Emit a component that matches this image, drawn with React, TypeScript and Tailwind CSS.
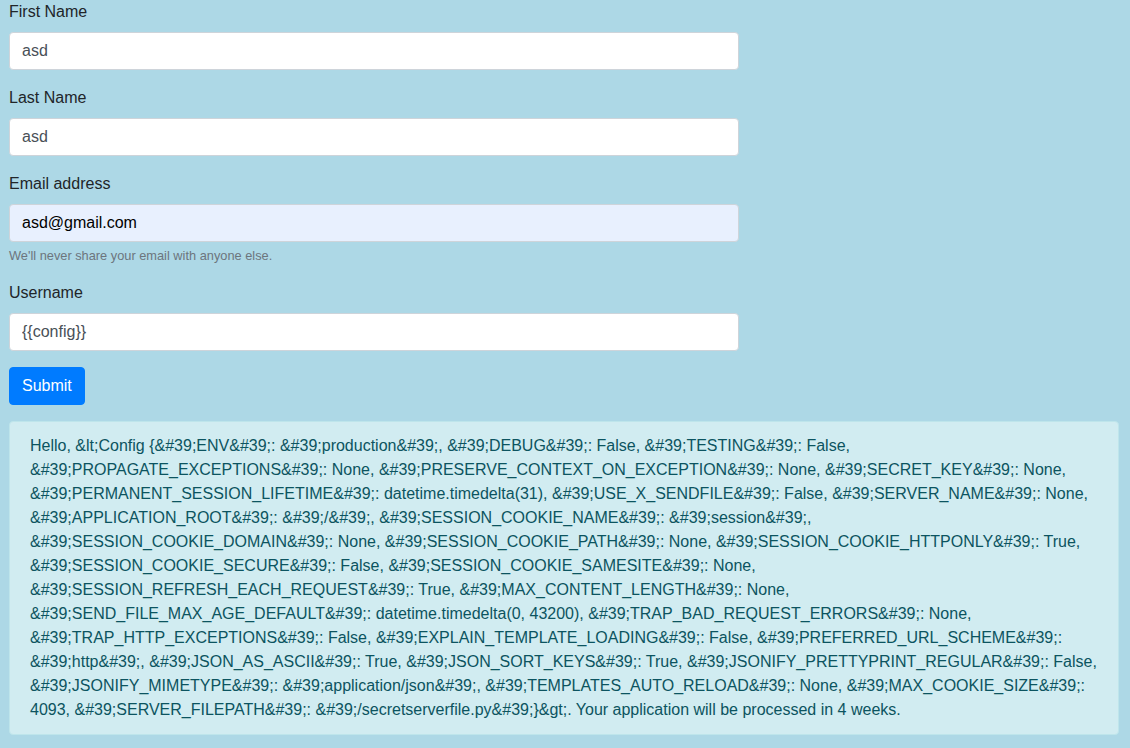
const lines = [
  "Hello, &lt;Config {&#39;ENV&#39;: &#39;production&#39;, &#39;DEBUG&#39;: False, &#39;TESTING&#39;: False,",
  "&#39;PROPAGATE_EXCEPTIONS&#39;: None, &#39;PRESERVE_CONTEXT_ON_EXCEPTION&#39;: None, &#39;SECRET_KEY&#39;: None,",
  "&#39;PERMANENT_SESSION_LIFETIME&#39;: datetime.timedelta(31), &#39;USE_X_SENDFILE&#39;: False, &#39;SERVER_NAME&#39;: None,",
  "&#39;APPLICATION_ROOT&#39;: &#39;/&#39;, &#39;SESSION_COOKIE_NAME&#39;: &#39;session&#39;,",
  "&#39;SESSION_COOKIE_DOMAIN&#39;: None, &#39;SESSION_COOKIE_PATH&#39;: None, &#39;SESSION_COOKIE_HTTPONLY&#39;: True,",
  "&#39;SESSION_COOKIE_SECURE&#39;: False, &#39;SESSION_COOKIE_SAMESITE&#39;: None,",
  "&#39;SESSION_REFRESH_EACH_REQUEST&#39;: True, &#39;MAX_CONTENT_LENGTH&#39;: None,",
  "&#39;SEND_FILE_MAX_AGE_DEFAULT&#39;: datetime.timedelta(0, 43200), &#39;TRAP_BAD_REQUEST_ERRORS&#39;: None,",
  "&#39;TRAP_HTTP_EXCEPTIONS&#39;: False, &#39;EXPLAIN_TEMPLATE_LOADING&#39;: False, &#39;PREFERRED_URL_SCHEME&#39;:",
  "&#39;http&#39;, &#39;JSON_AS_ASCII&#39;: True, &#39;JSON_SORT_KEYS&#39;: True, &#39;JSONIFY_PRETTYPRINT_REGULAR&#39;: False,",
  "&#39;JSONIFY_MIMETYPE&#39;: &#39;application/json&#39;, &#39;TEMPLATES_AUTO_RELOAD&#39;: None, &#39;MAX_COOKIE_SIZE&#39;:",
  "4093, &#39;SERVER_FILEPATH&#39;: &#39;/secretserverfile.py&#39;}&gt;. Your application will be processed in 4 weeks.",
];

function Field({
  label,
  value,
  autofill,
  help,
}: {
  label: string;
  value: string;
  autofill?: boolean;
  help?: string;
}) {
  return (
    <div className="mb-4 w-[730px]">
      <label className="mb-2 block h-6 leading-6 text-[#212529]">{label}</label>
      <input
        type="text"
        defaultValue={value}
        className={
          "block h-[38px] w-full rounded border border-[#ced4da] px-3 py-1.5 text-base leading-6 outline-none " +
          (autofill ? "bg-[#e8f0fe] text-black" : "bg-white text-[#495057]")
        }
      />
      {help && (
        <small className="mt-1 block text-[12.8px] leading-[19px] text-[#6c757d]">{help}</small>
      )}
    </div>
  );
}

export default function App() {
  return (
    <div className="min-h-[748px] bg-[#add8e6] pl-[9px] pr-[11px] font-['Liberation_Sans',Arial,sans-serif] text-base">
      <form>
        <Field label="First Name" value="asd" />
        <Field label="Last Name" value="asd" />
        <Field
          label="Email address"
          value="asd@gmail.com"
          autofill
          help="We'll never share your email with anyone else."
        />
        <Field label="Username" value="{{config}}" />
        <button
          type="button"
          className="mb-4 h-[38px] rounded border border-[#007bff] bg-[#007bff] px-3 leading-6 text-white"
        >
          Submit
        </button>
      </form>
      <div className="mb-4 rounded border border-[#bee5eb] bg-[#d1ecf1] px-5 py-3 leading-6 text-[#0c5460]">
        {lines.map((l, i) => (
          <div key={i} className="whitespace-nowrap">
            {l}
          </div>
        ))}
      </div>
    </div>
  );
}
